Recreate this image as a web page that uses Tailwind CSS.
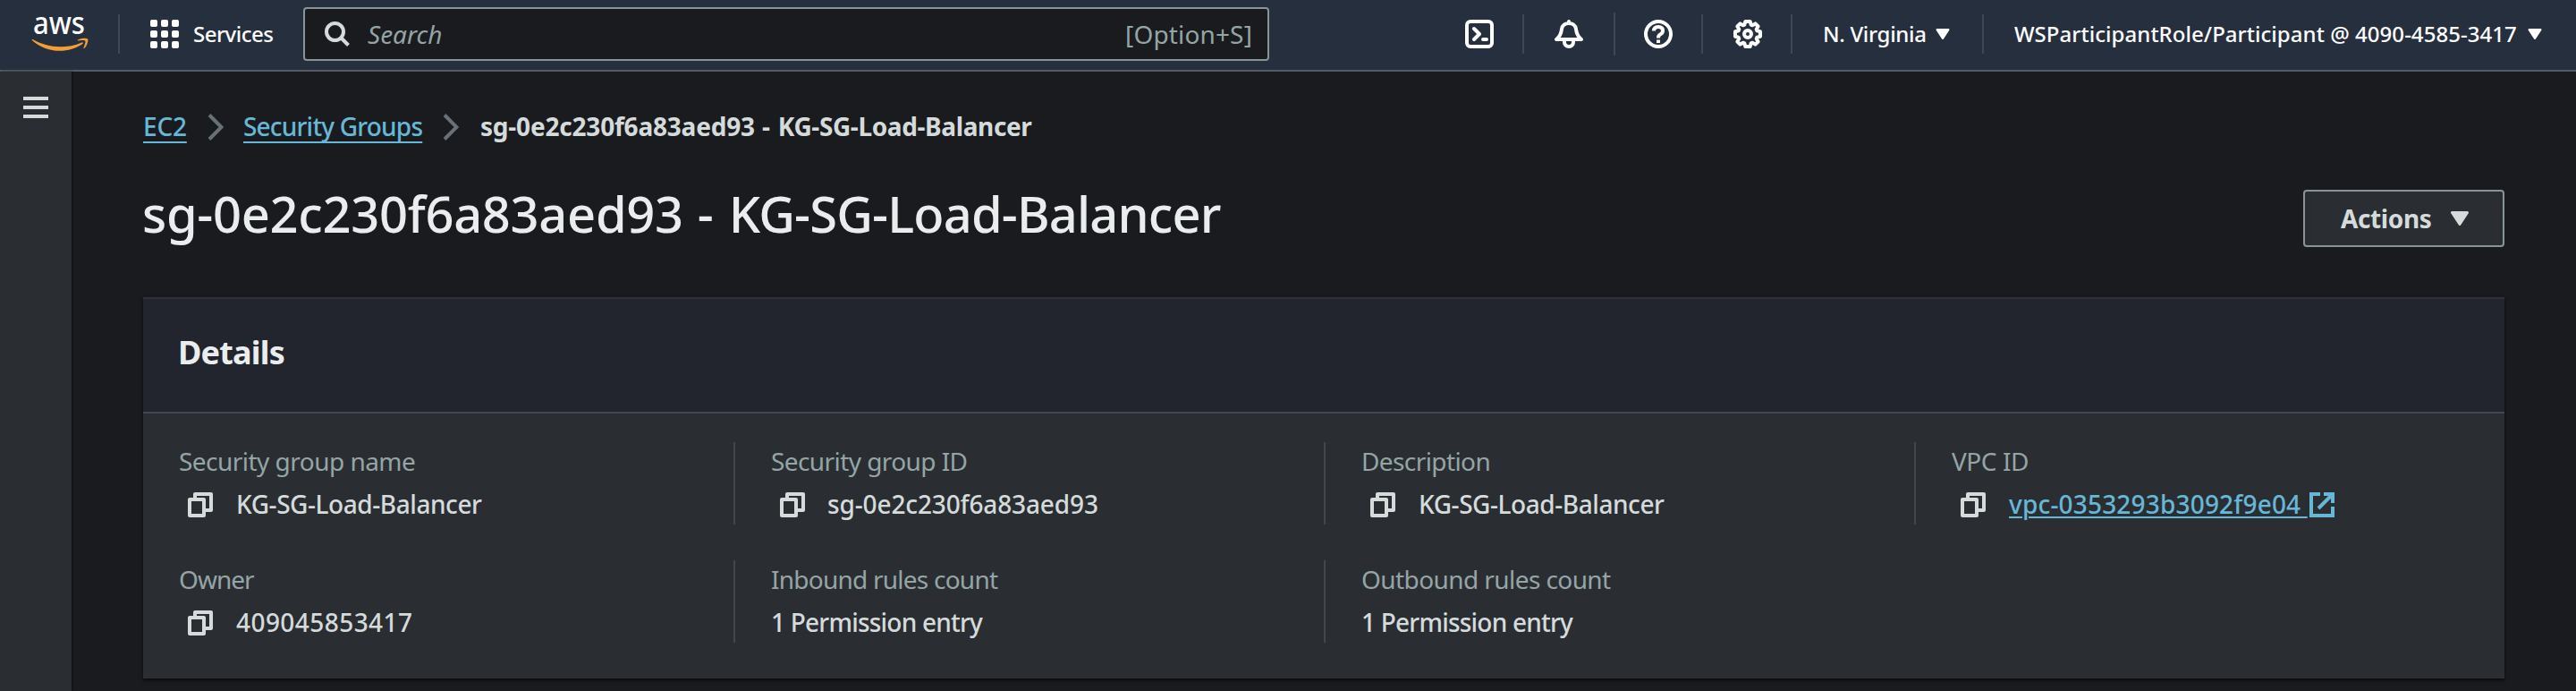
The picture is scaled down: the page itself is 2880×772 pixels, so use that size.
<!DOCTYPE html>
<html lang="en">
<head>
<meta charset="utf-8">
<title>Security group details</title>
<script src="https://cdn.jsdelivr.net/npm/@tailwindcss/browser@4"></script>
</head>
<body class="h-[772px] w-[2880px] overflow-hidden bg-[#1a1b1f] font-['Noto_Sans',sans-serif] text-[28px] leading-[42px] text-[#d5dbdb]">
<svg class="hidden">
  <symbol id="copy" viewBox="0 0 28 28"><path d="M2 8h16v18H2zM8 8V2h18v18h-8" fill="none" stroke="currentColor" stroke-width="4" stroke-linejoin="round"/></symbol>
  <symbol id="caret" viewBox="0 0 20 16"><path d="M1.500 1.500h17L10 14.500z" fill="currentColor" stroke="currentColor" stroke-width="3" stroke-linejoin="round"/></symbol>
  <symbol id="chevron" viewBox="0 0 18 30"><path d="M2 1.500 15.500 15 2 28.500" fill="none" stroke="currentColor" stroke-width="4"/></symbol>
</svg>

<header class="flex h-20 items-start border-b-2 border-[#545b64] bg-[#262f3e] text-white">
  <svg class="mt-[19px] ml-[35px] h-[38px] w-16 shrink-0 overflow-visible" viewBox="0 0 304 182">
    <text x="8" y="91" font-family="Noto Sans" font-weight="500" font-size="168" textLength="278" lengthAdjust="spacingAndGlyphs" fill="#fff">aws</text>
    <g fill="#f29d38"><path d="M273.500 143.700c-32.900 24.300-80.700 37.200-121.800 37.200-57.600 0-109.500-21.300-148.700-56.700-3.100-2.800-.3-6.600 3.400-4.400 42.400 24.600 94.700 39.500 148.800 39.500 36.500 0 76.600-7.600 113.500-23.200 5.500-2.500 10.200 3.600 4.800 7.600z"/><path d="M287.200 128.100c-4.200-5.400-27.800-2.600-38.500-1.300-3.200.4-3.700-2.400-.8-4.500 18.800-13.200 49.700-9.400 53.300-5 3.600 4.500-1 35.400-18.600 50.200-2.700 2.300-5.300 1.100-4.100-1.900 4-9.900 12.900-32.200 8.700-37.500z"/></g>
  </svg>
  <div class="mt-4 ml-[33px] h-11 w-0.5 bg-[#414750]"></div>
  <div class="mt-[22px] ml-[34px] grid h-8 w-8 shrink-0 grid-cols-3 gap-1">
    <i class="rounded-[2px] bg-white"></i><i class="rounded-[2px] bg-white"></i><i class="rounded-[2px] bg-white"></i>
    <i class="rounded-[2px] bg-white"></i><i class="rounded-[2px] bg-white"></i><i class="rounded-[2px] bg-white"></i>
    <i class="rounded-[2px] bg-white"></i><i class="rounded-[2px] bg-white"></i><i class="rounded-[2px] bg-white"></i>
  </div>
  <span class="mt-5 ml-4 w-[123px] shrink-0 text-2xl leading-9 font-medium tracking-[-0.52px]">Services</span>
  <div class="mt-2 flex h-[60px] w-[1080px] shrink-0 items-center rounded-[4px] border-2 border-[#879596] bg-[#1a1b1f] pr-[17px] pl-[22px] text-[#95a5a6]">
    <svg class="h-7 w-7 text-[#d5dbdb]" viewBox="0 0 28 28" fill="none" stroke="currentColor" stroke-width="4"><circle cx="11.500" cy="11.500" r="9.500"/><path d="m18 18 8.500 8.500"/></svg>
    <span class="ml-5 italic">Search</span>
    <span class="ml-auto tracking-[0.14px]">[Option+S]</span>
  </div>

  <svg class="mt-[22px] ml-[219px] h-8 w-8" viewBox="0 0 32 32" fill="none" stroke="currentColor" stroke-width="4" stroke-linecap="round" stroke-linejoin="round"><rect x="2" y="2" width="28" height="28" rx="4"/><path d="m10 10 6 6-6 6M20 22h4"/></svg>
  <div class="mt-4 ml-8 h-11 w-0.5 bg-[#414750]"></div>
  <svg class="mt-[22px] ml-[34px] h-8 w-8" viewBox="0 0 32 32" fill="none" stroke="currentColor" stroke-width="4" stroke-linecap="round" stroke-linejoin="round"><path d="M2 22h28c-4-3-5.500-7-6-11.500C23.500 6 20 4 16 4s-7.500 2-8 6.500C7.500 15 6 19 2 22zM16 2v2"/><path d="M11 22v3c0 3 2 5 5 5s5-2 5-5v-3"/></svg>
  <div class="mt-3.5 ml-[34px] h-12 w-0.5 bg-[#414750]"></div>
  <svg class="mt-[22px] ml-8 h-8 w-8" viewBox="0 0 32 32" fill="none" stroke="currentColor" stroke-width="4"><circle cx="16" cy="16" r="14"/><path d="M11 12.500C11 9.500 13 8 16 8s5 1.500 5 4.500c0 2.500-1.500 3-3 4-1.500.8-2 1.500-2 4"/><path d="M16 22.500v3.500"/></svg>
  <div class="mt-4 ml-8 h-11 w-0.5 bg-[#414750]"></div>
  <svg class="mt-[22px] ml-[34px] h-8 w-8" viewBox="0 0 32 32" fill="none" stroke="currentColor" stroke-width="4" stroke-linejoin="round"><path d="M13.300 2h5.400l.9 3.600 1.700.7L24.500 4.400l3.100 3.100-1.900 3.200.7 1.700 3.600.9v5.400l-3.600.9-.7 1.700 1.900 3.200-3.100 3.100-3.200-1.900-1.700.7-.9 3.600h-5.400l-.9-3.600-1.700-.7-3.200 1.900-3.100-3.100 1.900-3.200-.7-1.700L2 18.700v-5.400l3.600-.9.7-1.700-1.900-3.200 3.100-3.100 3.200 1.900 1.700-.7z"/><circle cx="16" cy="16" r="4"/></svg>
  <div class="mt-4 ml-8 h-11 w-0.5 bg-[#414750]"></div>
  <span class="mt-5 ml-[34px] w-[126px] shrink-0 text-2xl leading-9 font-medium tracking-[-0.32px] whitespace-nowrap">N. Virginia</span>
  <svg class="mt-8 h-3 w-4"><use href="#caret"/></svg>
  <div class="mt-4 ml-9 h-11 w-0.5 bg-[#414750]"></div>
  <span class="mt-5 ml-[34px] w-[574px] shrink-0 text-2xl leading-9 font-medium tracking-[0.04px] whitespace-nowrap">WSParticipantRole/Participant @ 4090-4585-3417</span>
  <svg class="mt-8 h-3 w-4 shrink-0"><use href="#caret"/></svg>
</header>

<div class="flex h-[692px]">
  <aside class="w-20 shrink-0 bg-[#2a2e33] shadow-[1px_0_2px_#0008]">
    <div class="mt-7 ml-[26px] flex w-7 flex-col gap-1.5">
      <i class="h-1 bg-[#d5dbdb]"></i><i class="h-1 bg-[#d5dbdb]"></i><i class="h-1 bg-[#d5dbdb]"></i>
    </div>
  </aside>
  <main class="flex w-[2800px] flex-col px-20 pt-10">
    <nav class="flex h-[42px] items-start whitespace-nowrap">
      <a class="w-[72px] text-[#67b7d6] underline decoration-2 underline-offset-[6px] [text-decoration-skip-ink:none]"><span class="font-medium tracking-[-0.19px]">EC2</span></a>
      <svg class="mt-[7px] h-[30px] w-[18px] text-[#687078]"><use href="#chevron"/></svg>
      <a class="ml-[22px] w-[223px] font-medium tracking-[-0.8px] text-[#67b7d6] underline decoration-2 underline-offset-[6px] [text-decoration-skip-ink:none]">Security Groups</a>
      <svg class="mt-[7px] h-[30px] w-[18px] text-[#687078]"><use href="#chevron"/></svg>
      <span class="ml-6 font-bold tracking-[-0.2px]">sg-0e2c230f6a83aed93<span class="tracking-[0.8px]"> - </span><span class="tracking-[-0.38px]">KG-SG-Load-Balancer</span></span>
    </nav>
    <div class="mt-[41px] flex h-[129px] items-start justify-between text-[#eaeded]">
      <h1 class="-ml-px text-[56px] leading-[70px] font-medium tracking-[-0.3px] whitespace-nowrap">sg-0e2c230f6a83aed93<span class="tracking-[1.3px]"> - </span><span class="tracking-[-0.83px]">KG-SG-Load-Balancer</span></h1>
      <button class="mt-[9px] flex h-16 w-[225px] items-center rounded-[4px] border-2 border-[#879596] bg-[#2a2e33] pl-10 text-[#d5dbdb]">
        <span class="w-[123px] text-left font-bold tracking-[-0.39px]">Actions</span>
        <svg class="h-4 w-5"><use href="#caret"/></svg>
      </button>
    </div>
    <section class="h-[426px] border-t-2 border-[#2d3035] bg-[#2a2e33] shadow-[0_2px_4px_#000a]">
      <h2 class="h-32 border-b-2 border-[#414750] bg-[#22252e] pt-9 pl-[39px] text-4xl leading-[48px] font-bold tracking-[-0.79px] text-[#eaeded]">Details</h2>
      <div class="grid h-[224px] grid-cols-[622px_660px_660px_620px] grid-rows-[92px_92px] gap-y-10 pt-8 pl-10 whitespace-nowrap">
        <div class="flex flex-col gap-1.5 border-r-2 border-[#414750]">
          <span class="tracking-[-0.53px] text-[#95a5a6]">Security group name</span>
          <div class="flex font-medium"><svg class="mt-2 ml-2.5 h-7 w-7"><use href="#copy"/></svg><span class="ml-[26px] tracking-[-0.44px]">KG-SG-Load-Balancer</span></div>
        </div>
        <div class="flex flex-col gap-1.5 border-r-2 border-[#414750] pl-10">
          <span class="tracking-[-0.58px] text-[#95a5a6]">Security group ID</span>
          <div class="flex font-medium"><svg class="mt-2 ml-2.5 h-7 w-7"><use href="#copy"/></svg><span class="ml-[25px] tracking-[-0.13px]">sg-0e2c230f6a83aed93</span></div>
        </div>
        <div class="flex flex-col gap-1.5 border-r-2 border-[#414750] pl-10">
          <span class="tracking-[-0.59px] text-[#95a5a6]">Description</span>
          <div class="flex font-medium"><svg class="mt-2 ml-2.5 h-7 w-7"><use href="#copy"/></svg><span class="ml-[26px] tracking-[-0.44px]">KG-SG-Load-Balancer</span></div>
        </div>
        <div class="flex flex-col gap-1.5 pl-10">
          <span class="tracking-[-0.44px] text-[#95a5a6]">VPC ID</span>
          <div class="flex font-medium"><svg class="mt-2 ml-2.5 h-7 w-7"><use href="#copy"/></svg>
            <a class="ml-[26px] flex w-[364px] justify-between text-[#67b7d6]"><span class="tracking-[0.18px] whitespace-pre underline decoration-2 underline-offset-[3px]">vpc-0353293b3092f9e04 </span><svg class="mt-2 h-7 w-7" viewBox="0 0 28 28" fill="none" stroke="currentColor" stroke-width="4"><path d="M12 2H2v24h24V16M16 2h10v10M26 2 10 18"/></svg></a>
          </div>
        </div>
        <div class="flex flex-col gap-1.5 border-r-2 border-[#414750]">
          <span class="tracking-[-0.99px] text-[#95a5a6]">Owner</span>
          <div class="flex font-medium"><svg class="mt-2 ml-2.5 h-7 w-7"><use href="#copy"/></svg><span class="ml-[26px] tracking-[0.44px]">409045853417</span></div>
        </div>
        <div class="flex flex-col gap-1.5 border-r-2 border-[#414750] pl-10">
          <span class="tracking-[-0.76px] text-[#95a5a6]">Inbound rules count</span>
          <span class="font-medium tracking-[-0.78px]">1 Permission entry</span>
        </div>
        <div class="flex flex-col gap-1.5 pl-10">
          <span class="tracking-[-0.58px] text-[#95a5a6]">Outbound rules count</span>
          <span class="font-medium tracking-[-0.78px]">1 Permission entry</span>
        </div>
      </div>
    </section>
  </main>
</div>
</body>
</html>
